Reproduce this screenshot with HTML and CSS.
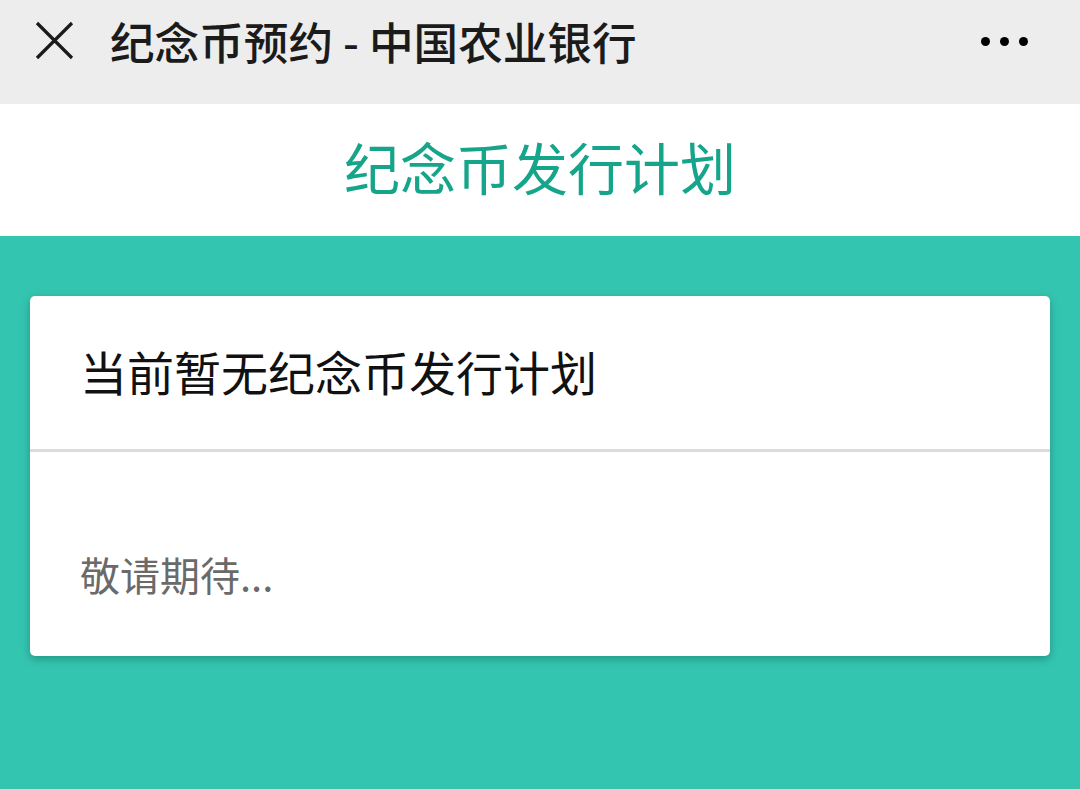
FILE: index.html
```html
<!DOCTYPE html>
<html lang="zh-CN">
<head>
<meta charset="utf-8">
<title>纪念币预约 - 中国农业银行</title>
<link rel="stylesheet" href="styles.css">
</head>
<body>
<header class="topbar">
  <div class="close">
    <svg width="40" height="40" viewBox="0 0 40 40"><path d="M2 2 L37 37 M37 2 L2 37" stroke="#1a1a1a" stroke-width="3.2" fill="none"/></svg>
  </div>
  <h1 class="title">纪念币预约 - 中国农业银行</h1>
  <div class="more"><span></span><span></span><span></span></div>
</header>
<section class="subhead">纪念币发行计划</section>
<main class="content">
  <div class="card">
    <div class="card-head">当前暂无纪念币发行计划</div>
    <div class="card-body">敬请期待...</div>
  </div>
</main>
</body>
</html>
```
FILE: styles.css
```css
* { box-sizing: border-box; }
html, body { margin: 0; padding: 0; }
body {
  width: 1080px;
  height: 789px;
  overflow: hidden;
  font-family: "Noto Sans CJK SC", "Noto Sans", sans-serif;
  background: #34c5b1;
}
.topbar {
  height: 104px;
  background: #ededed;
  display: flex;
  align-items: center;
  padding: 0 52px 22px 35px;
}
.close { width: 40px; height: 40px; display: flex; }
.title {
  margin: 0 0 0 35px;
  flex: 1;
  font-size: 44.6px;
  font-weight: 500;
  color: #1b1b1b;
  line-height: 1;
}
.more { display: flex; gap: 9.5px; margin-top: 1px; }
.more span {
  width: 9.5px; height: 9.5px; border-radius: 50%;
  background: #000;
}
.subhead {
  height: 132px;
  background: #fff;
  display: flex;
  align-items: center;
  justify-content: center;
  font-size: 56px;
  color: #16a58b;
  padding-bottom: 10px;
}
.content { padding: 60px 30px 0; }
.card {
  background: #fff;
  border-radius: 5px;
  box-shadow: 0 3px 8px rgba(0, 60, 50, 0.35);
  overflow: hidden;
}
.card-head {
  height: 156px;
  border-bottom: 3px solid #dcdcdc;
  display: flex;
  align-items: center;
  padding: 0 50px 4px;
  font-size: 47px;
  color: #111;
}
.card-body {
  height: 204px;
  padding: 94px 50px 0;
  font-size: 40px;
  line-height: 56px;
  color: #6a6a6a;
}
```
